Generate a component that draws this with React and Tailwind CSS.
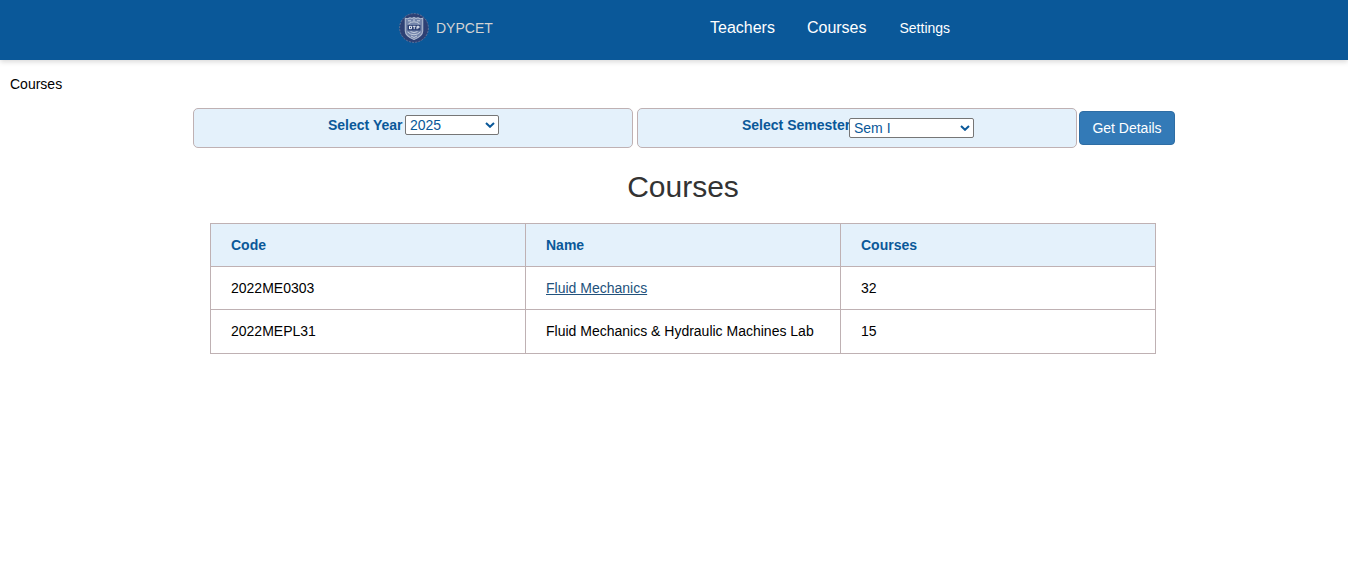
function Crest() {
  return (
    <svg className="size-[30px] shrink-0" viewBox="0 0 30 30">
      <circle cx="15" cy="15" r="14.4" fill="#2d4074" />
      <circle cx="15" cy="15" r="14.4" fill="none" stroke="#66769b" strokeWidth="0.9" strokeDasharray="2 1.2" />
      <path d="M6.3 5.3 Q9 6.3 11 4.8 Q13 6 15 4.5 Q17 6 19 4.8 Q21 6.3 23.7 5.3 V18 Q23.7 23 15 26.5 Q6.3 23 6.3 18 Z" fill="#7283aa" stroke="#aebad0" strokeWidth="1.1" />
      <path d="M9 7.8 H12 M14 7 H16 M18 7.8 H21 M9.5 10.8 Q15 6.8 20.5 10.8" fill="none" stroke="#c3cddd" strokeWidth="1" />
      <path d="M8.5 12 H21.5 V17.5 H8.5 Z" fill="#2d4074" />
      <path d="M10.5 13 V16 M10.5 13.3 H12.5 V15.7 H10.5 M13.7 13.3 H16.7 M15.2 13.3 V16.2 M18 16.2 V13.3 H20 V14.8 H18" fill="none" stroke="#e8edf5" strokeWidth="1" />
      <path d="M8.5 19 Q15 24.5 21.5 19 M11.5 18.5 Q15 21 18.5 18.5 M12 23 L15 24.5 L18 23" fill="none" stroke="#c3cddd" strokeWidth="1" />
    </svg>
  );
}

function Select({ label, value, width }) {
  return (
    <div className={`grid h-5 ${width}`}>
      <select
        aria-label={label}
        className="col-start-1 row-start-1 h-5 w-full appearance-none rounded-[2px] border border-[#767676] bg-white pl-1 text-sm leading-[18px] text-[#0a5899]"
      >
        <option>{value}</option>
      </select>
      <svg className="pointer-events-none col-start-1 row-start-1 mr-1 h-[6px] w-[10px] self-center justify-self-end" viewBox="0 0 10 6">
        <path d="M1 1 L5 4.8 L9 1" fill="none" stroke="#0a5899" strokeWidth="2" />
      </svg>
    </div>
  );
}

const rows = [
  { code: "2022ME0303", name: "Fluid Mechanics", count: 32, link: true },
  { code: "2022MEPL31", name: "Fluid Mechanics & Hydraulic Machines Lab", count: 15 },
];

export default function App() {
  return (
    <div className="min-h-screen bg-white font-['Liberation_Sans',Arial,sans-serif] text-sm leading-5 text-black">
      <header className="flex h-[60px] bg-[#0a5899] pl-[399px] shadow-[0_2px_5px_rgba(0,0,0,0.15)]">
        <div className="flex h-14 w-[311px] items-center gap-[7px] text-[#d3d3d3]">
          <Crest />
          <span>DYPCET</span>
        </div>
        <nav className="flex h-14 items-center gap-8 text-base text-white">
          <a href="#teachers">Teachers</a>
          <a href="#courses">Courses</a>
          <a href="#settings" className="ml-px text-sm">Settings</a>
        </nav>
      </header>
      <p className="pt-[14px] pl-[10px]">Courses</p>
      <div className="mt-[14px] flex pl-[193px]">
        <div className="flex h-10 w-[440px] items-start rounded-[5px] border border-[#bfb1b3] bg-[#e4f1fb] pt-[6px] pl-[134px] font-bold text-[#0a5899]">
          <span className="w-[77px] whitespace-nowrap">Select Year</span>
          <Select label="Select Year" value="2025" width="w-[94px] font-normal" />
        </div>
        <div className="ml-1 flex h-10 w-[440px] items-start rounded-[5px] border border-[#bfb1b3] bg-[#e4f1fb] pt-[6px] pl-[104px] font-bold text-[#0a5899]">
          <span className="w-[107px] whitespace-nowrap">Select Semester</span>
          <Select label="Select Semester" value="Sem I" width="mt-[3px] w-[125px] font-normal" />
        </div>
        <button className="mt-[3px] ml-[2px] h-[34px] w-24 rounded-[4px] border border-[#2e6da4] bg-[#337ab7] text-white">Get Details</button>
      </div>
      <main className="ml-[210px] w-[946px]">
        <h1 className="mt-[22px] text-center text-[30px] leading-[33px] text-[#333333]">Courses</h1>
        <table className="mt-5 w-full table-fixed border-collapse text-left">
          <thead>
            <tr className="h-[43px] bg-[#e4f1fb] text-[#0a5899]">
              <th className="border border-[#bfb1b3] px-5 py-0">Code</th>
              <th className="border border-[#bfb1b3] px-5 py-0">Name</th>
              <th className="border border-[#bfb1b3] px-5 py-0">Courses</th>
            </tr>
          </thead>
          <tbody>
            {rows.map((row) => (
              <tr key={row.code} className="h-[43px] align-top last:h-11">
                <td className="border border-[#bfb1b3] px-5 pt-[11px] pb-0">{row.code}</td>
                <td className="border border-[#bfb1b3] px-5 pt-[11px] pb-0">
                  {row.link ? <a href="#course" className="text-[#23527c] underline">{row.name}</a> : row.name}
                </td>
                <td className="border border-[#bfb1b3] px-5 pt-[11px] pb-0">{row.count}</td>
              </tr>
            ))}
          </tbody>
        </table>
      </main>
    </div>
  );
}
